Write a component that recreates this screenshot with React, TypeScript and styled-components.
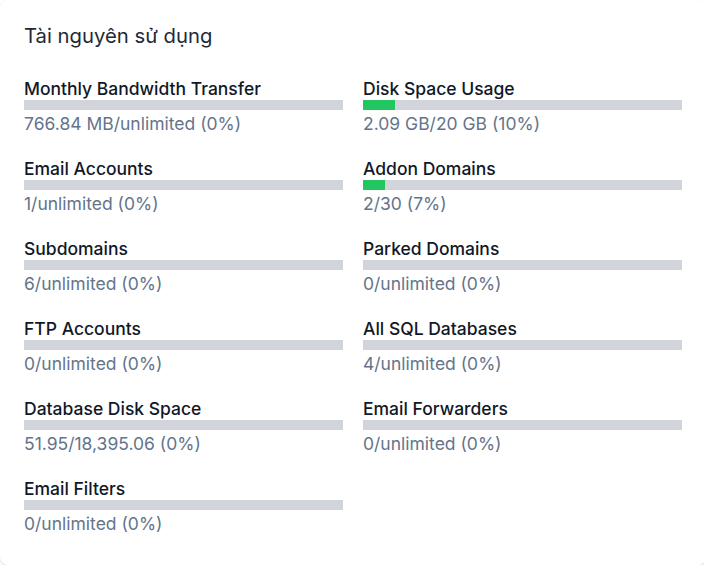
import React from "react";
import styled, { createGlobalStyle } from "styled-components";

interface Resource {
  label: string;
  value: string;
  percent: number;
}

const GlobalStyle = createGlobalStyle`
    html, body {
      margin: 0;
      padding: 0;
      background: #ffffff;
      overflow: hidden;
    }
    body {
      font-family: Inter, "Noto Sans", sans-serif;
    }
  `,
  Card = styled.section`
    width: 706px;
    box-sizing: border-box;
    padding: 22px 24px 29px;
    background: #ffffff;
    border-radius: 8px;
    box-shadow: 0 1px 2px -0.5px rgba(15, 23, 42, 0.16);
  `,
  Title = styled.h2`
    margin: 0 0 26px;
    font-size: 20.3px;
    line-height: 28px;
    font-weight: 400;
    color: #1f2937;
  `,
  Grid = styled.div`
    display: grid;
    grid-template-columns: 319px 319px;
    column-gap: 20px;
    row-gap: 20px;
  `,
  Item = styled.div`
    display: flex;
    flex-direction: column;
  `,
  Label = styled.div`
    padding-top: 2px;
    font-size: 17.5px;
    line-height: 22px;
    font-weight: 500;
    color: #111827;
  `,
  Track = styled.div`
    height: 10px;
    background: #d1d5db;
    overflow: hidden;
  `,
  Fill = styled.div<{ $percent: number }>`
    width: ${({ $percent }) => `${$percent}%`};
    height: 100%;
    background: #22c55e;
  `,
  Value = styled.div`
    padding-top: 2px;
    font-size: 17.5px;
    line-height: 24px;
    color: #64748b;
  `;

const resources: Resource[] = [
  { label: "Monthly Bandwidth Transfer", value: "766.84 MB/unlimited (0%)", percent: 0 },
  { label: "Disk Space Usage", value: "2.09 GB/20 GB (10%)", percent: 10 },
  { label: "Email Accounts", value: "1/unlimited (0%)", percent: 0 },
  { label: "Addon Domains", value: "2/30 (7%)", percent: 7 },
  { label: "Subdomains", value: "6/unlimited (0%)", percent: 0 },
  { label: "Parked Domains", value: "0/unlimited (0%)", percent: 0 },
  { label: "FTP Accounts", value: "0/unlimited (0%)", percent: 0 },
  { label: "All SQL Databases", value: "4/unlimited (0%)", percent: 0 },
  { label: "Database Disk Space", value: "51.95/18,395.06 (0%)", percent: 0 },
  { label: "Email Forwarders", value: "0/unlimited (0%)", percent: 0 },
  { label: "Email Filters", value: "0/unlimited (0%)", percent: 0 },
];

const App: React.FC = () => (
  <>
    <GlobalStyle />
    <Card>
      <Title>Tài nguyên sử dụng</Title>
      <Grid>
        {resources.map(({ label, value, percent }) => (
          <Item key={label}>
            <Label>{label}</Label>
            <Track>
              <Fill $percent={percent} />
            </Track>
            <Value>{value}</Value>
          </Item>
        ))}
      </Grid>
    </Card>
  </>
);

export default App;
